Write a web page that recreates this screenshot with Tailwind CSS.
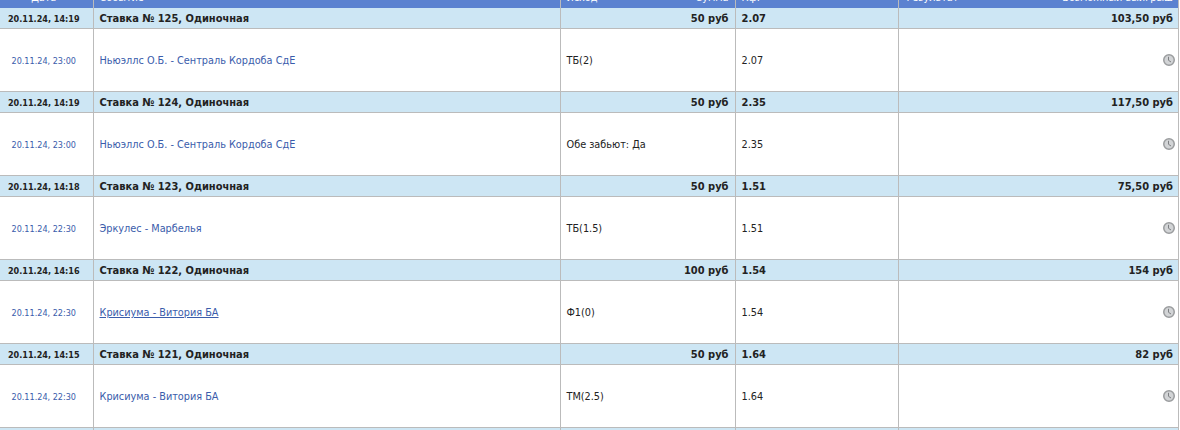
<!DOCTYPE html>
<html lang="en">
<head>
    <meta charset="UTF-8">
    <title>Ставки</title>
    <script src="https://cdn.jsdelivr.net/npm/@tailwindcss/browser@4"></script>
</head>
<body class="bg-white overflow-hidden">
  <div class="h-[430px] overflow-hidden">
    <table class="-mt-[13px] w-[1179px] table-fixed border-collapse font-['DejaVu_Sans_Condensed','DejaVu_Sans',sans-serif] font-stretch-condensed text-[10.8px] leading-[14px] text-[#222]">
      <colgroup>
        <col class="w-[93px]"><col class="w-[467px]"><col class="w-[175px]"><col class="w-[163px]"><col>
      </colgroup>
      <thead>
        <tr class="h-[20px] bg-[#5b82d0] text-white border-b border-[#5b82d0]">
          <th class="font-normal pt-[3px] pr-[5px] text-center border-r border-[#bbb]">Дата</th>
          <th class="font-normal pt-[3px] text-left px-[6px] border-r border-[#bbb]">Событие</th>
          <th class="font-normal pt-[3px] border-r border-[#bbb] px-[6px]"><div class="flex justify-between"><span>Исход</span><span>Сумма</span></div></th>
          <th class="font-normal pt-[3px] text-left px-[6px] border-r border-[#bbb]">Кф.</th>
          <th class="font-normal pt-[3px] pl-[8px] pr-[5px] border-r border-[#bbb]"><div class="flex justify-between"><span>Результат</span><span>Возможный выигрыш</span></div></th>
        </tr>
      </thead>
      <tbody id="bets"></tbody>
    </table>
  </div>

  <script>
    const bets = [
      { date: '20.11.24, 14:19', num: 125, sum: '50 руб', k: '2.07', win: '103,50 руб', start: '20.11.24, 23:00', event: 'Ньюэллс О.Б. - Сентраль Кордоба СдЕ', pick: 'ТБ(2)' },
      { date: '20.11.24, 14:19', num: 124, sum: '50 руб', k: '2.35', win: '117,50 руб', start: '20.11.24, 23:00', event: 'Ньюэллс О.Б. - Сентраль Кордоба СдЕ', pick: 'Обе забьют: Да' },
      { date: '20.11.24, 14:18', num: 123, sum: '50 руб', k: '1.51', win: '75,50 руб', start: '20.11.24, 22:30', event: 'Эркулес - Марбелья', pick: 'ТБ(1.5)' },
      { date: '20.11.24, 14:16', num: 122, sum: '100 руб', k: '1.54', win: '154 руб', start: '20.11.24, 22:30', event: 'Крисиума - Витория БА', pick: 'Ф1(0)', hover: true },
      { date: '20.11.24, 14:15', num: 121, sum: '50 руб', k: '1.64', win: '82 руб', start: '20.11.24, 22:30', event: 'Крисиума - Витория БА', pick: 'ТМ(2.5)' },
    ];

    let kod = '';
    bets.forEach(bet => {
      kod += `
        <tr class="h-[21px] bg-[#cde6f4] font-bold border-t border-[#bbb]">
          <td class="pt-[3px] pr-[5px] text-center text-[9px] border-r border-[#bbb]">${bet.date}</td>
          <td class="pt-[3px] px-[6px] text-[11px] border-r border-[#bbb]">Ставка № ${bet.num}, Одиночная</td>
          <td class="pt-[3px] px-[6px] text-[11px] text-right border-r border-[#bbb]">${bet.sum}</td>
          <td class="pt-[3px] px-[6px] text-[11px] border-r border-[#bbb]">${bet.k}</td>
          <td class="pt-[3px] pl-[6px] pr-[5px] text-[11px] text-right border-r border-[#bbb]">${bet.win}</td>
        </tr>
        <tr class="h-[63px] border-t border-[#bbb]">
          <td class="pt-[3px] pr-[5px] text-center text-[9px] text-[#3a5cab] border-r border-[#bbb]">${bet.start}</td>
          <td class="pt-[3px] px-[6px] border-r border-[#bbb]"><a href="#" class="text-[#3a5cab] ${bet.hover ? 'underline' : ''}">${bet.event}</a></td>
          <td class="pt-[3px] px-[6px] border-r border-[#bbb]">${bet.pick}</td>
          <td class="pt-[3px] px-[6px] border-r border-[#bbb]">${bet.k}</td>
          <td class="px-[3px] border-r border-[#bbb]">
            <svg class="ml-auto block" width="12" height="12" viewBox="0 0 12 12">
              <circle cx="6" cy="6" r="5.25" fill="#d2d4d6" stroke="#9a9c9e" stroke-width="1.5"/>
              <path d="M5.5 2.8V6.3L8 8" fill="none" stroke="#7d7f82" stroke-width="1"/>
            </svg>
          </td>
        </tr>`;
    });
    // next bet is cut off by the window, only its top shows
    kod += `
        <tr class="h-[21px] bg-[#cde6f4] border-t border-[#bbb]">
          <td class="border-r border-[#bbb]"></td>
          <td class="border-r border-[#bbb]"></td>
          <td class="border-r border-[#bbb]"></td>
          <td class="border-r border-[#bbb]"></td>
          <td class="border-r border-[#bbb]"></td>
        </tr>`;
    document.getElementById('bets').innerHTML = kod;
  </script>
</body>
</html>
